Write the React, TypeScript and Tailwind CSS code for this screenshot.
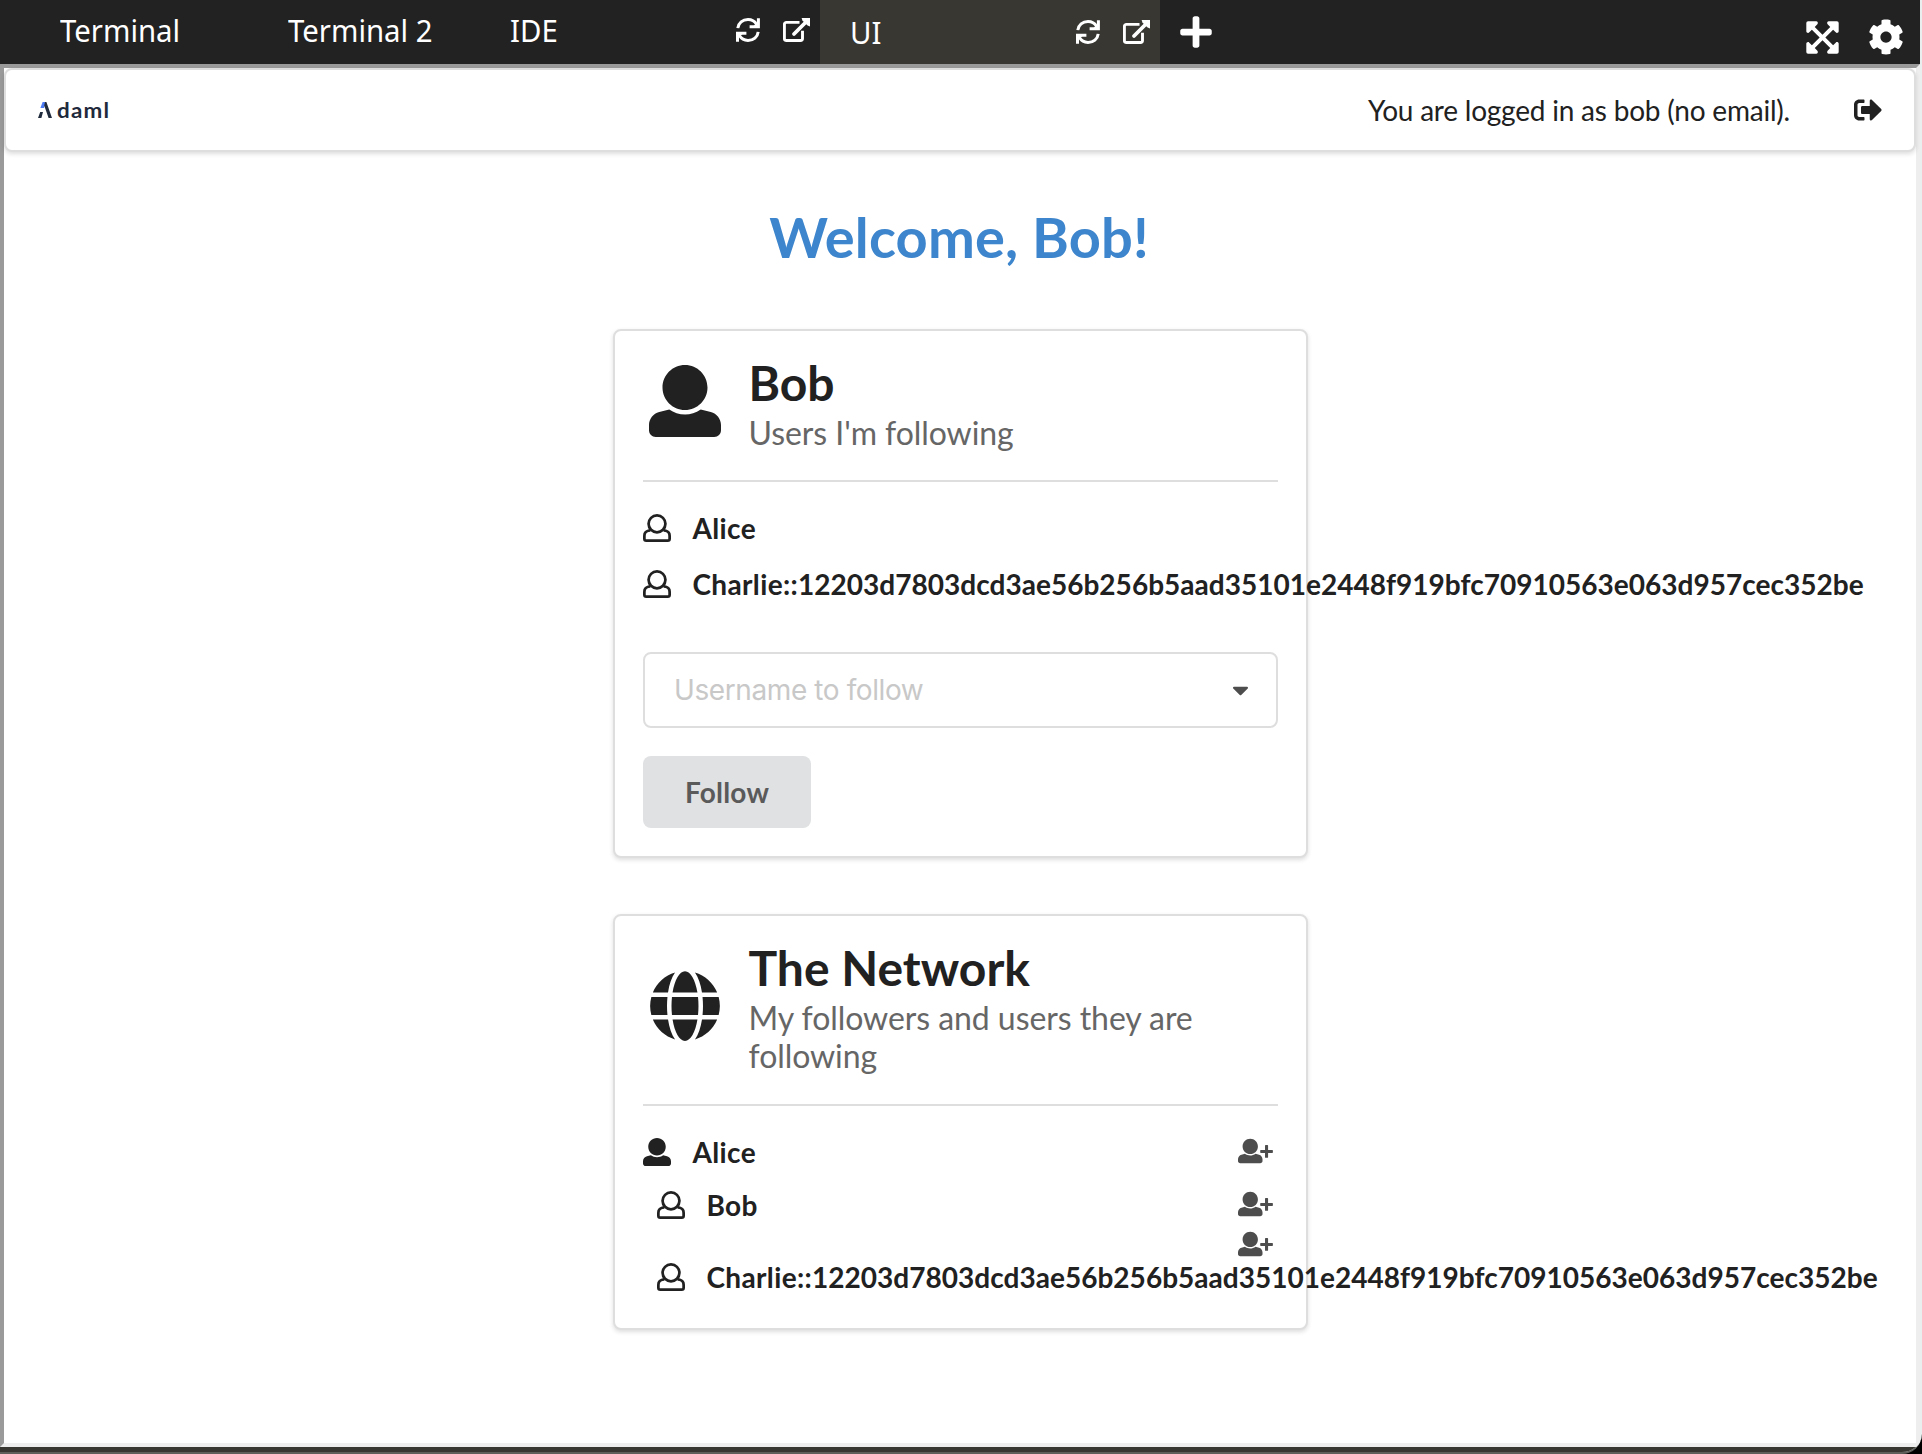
import React from "react";
import { FaPlus, FaExpandArrowsAlt, FaCog, FaSignOutAlt, FaGlobe, FaCaretDown } from "react-icons/fa";

const CHARLIE_ID = "12203d7803dcd3ae56b256b5aad35101e2448f919bfc70910563e063d957cec352be";

function RefreshIcon() {
  return (
    <svg viewBox="0 0 24 24" className="h-6 w-6" fill="none" stroke="#fff" strokeWidth="3">
      <path d="M1.8 10.2C2.4 5 6.6 1.6 12 1.6c3.8 0 6.8 1.8 8.6 4.8" />
      <path d="M22.4 0.2V8.8H13.6" />
      <path d="M22.2 13.8C21.6 19 17.4 22.4 12 22.4c-3.8 0-6.8-1.8-8.6-4.8" />
      <path d="M1.5 23.8V15.2H10.4" />
      <path d="M17 8.6L22.8 3V8.6zM7 15.4L1.2 21V15.4z" fill="#fff" stroke="none" />
    </svg>
  );
}

function ExternalIcon() {
  return (
    <svg viewBox="0 0 27 24" className="h-6 w-[27px]" fill="none" stroke="#fff">
      <path d="M16.5 4.4H3.4a2 2 0 0 0-2 2V20.5a2 2 0 0 0 2 2H17.5a2 2 0 0 0 2-2V12.8" strokeWidth="2.9" />
      <path d="M11 16L23 4" strokeWidth="3.8" strokeLinecap="round" />
      <path d="M18.6 0H27V8.4L24.6 7.6 19.4 2.4z" fill="#fff" stroke="none" />
    </svg>
  );
}

const USER_PATH =
  "M256 0c88.366 0 160 71.634 160 160s-71.634 160-160 160S96 248.366 96 160 167.634 0 256 0zm183.283 333.821l-71.313-17.828c-74.923 53.89-165.738 41.864-223.94 0l-71.313 17.828C29.981 344.505 0 382.903 0 426.955V464c0 26.51 21.49 48 48 48h416c26.51 0 48-21.49 48-48v-37.045c0-44.052-29.981-82.45-72.717-93.134z";

function UserSolid({ className }: { className: string }) {
  return (
    <svg viewBox="0 0 512 512" className={className} fill="#212121">
      <path d={USER_PATH} />
    </svg>
  );
}

function UserOutline() {
  return (
    <svg viewBox="0 0 512 512" className="-ml-[0.5px] h-7 w-7 shrink-0" fill="none" stroke="#212121" strokeWidth="50">
      <circle cx="256" cy="180" r="154" />
      <path d="M132 298L95 307C52 319 25 356 25 400V452Q25 487 60 487H452Q487 487 487 452V400C487 356 460 319 417 307L380 298" />
    </svg>
  );
}

function UserPlus() {
  return (
    <svg viewBox="0 0 640 512" className="mr-[5.5px] mb-px h-7 w-[35px] shrink-0" fill="#4d4d4d">
      <path d={USER_PATH} transform="translate(0 32) scale(.875)" />
      <path
        d="M508 160a12 12 0 0 1 12-12h32a12 12 0 0 1 12 12v76h76a12 12 0 0 1 12 12v32a12 12 0 0 1-12 12h-76v76a12 12 0 0 1-12 12h-32a12 12 0 0 1-12-12v-76h-76a12 12 0 0 1-12-12v-32a12 12 0 0 1 12-12h76z"
        transform="translate(-14 0)"
      />
    </svg>
  );
}

function TabLabel({ children }: { children: React.ReactNode }) {
  return <span className="origin-left scale-x-[.947] whitespace-pre">{children}</span>;
}

function TopBar() {
  return (
    <div className="flex h-16 w-[1920px] bg-[#222222] font-['Noto_Sans',sans-serif] text-[31px] leading-[60px] text-white">
      <div className="flex w-[257px] pl-[60px]"><TabLabel>Terminal</TabLabel></div>
      <div className="flex w-[223px] pl-[31px]"><TabLabel>Terminal 2</TabLabel></div>
      <div className="flex w-[340px] pr-[10px] pl-[30px]">
        <TabLabel>IDE</TabLabel>
        <div className="ml-auto flex gap-[23px] pt-[18px]"><RefreshIcon /><ExternalIcon /></div>
      </div>
      <div className="flex w-[340px] bg-[#383732] pt-[2px] pr-[10px] pl-[30px]">
        <TabLabel>UI</TabLabel>
        <div className="ml-auto flex gap-[23px] pt-[18px]"><RefreshIcon /><ExternalIcon /></div>
      </div>
      <FaPlus className="mt-[14px] ml-[20px] h-9 w-8" />
      <div className="ml-auto flex gap-[29px] pr-[16px]">
        <FaExpandArrowsAlt className="mt-[19px] h-[37px] w-[33px]" />
        <FaCog className="mt-[19px] h-[36px] w-[36px]" />
      </div>
    </div>
  );
}

function Navbar() {
  return (
    <div className="flex h-[84px] items-center rounded-lg border-2 border-[#dededf] bg-white shadow-[0_2px_4px_0_rgba(34,36,38,0.15)]">
      <div className="ml-8 flex items-center">
        <svg viewBox="0 0 14 16" className="h-4 w-[14px]">
          <path d="M4.6 0H8L6 6H2.4z" fill="#4c7bf4" />
          <path d="M7 0H8.4L14 16H10.6L6.2 3.4zM2.2 10H5L3.4 16H0z" fill="#1f2a3c" />
        </svg>
        <span className="ml-[5px] origin-left scale-x-[1.12] text-[20px] leading-6 font-bold tracking-[1.1px] text-[#1f2a3c]">daml</span>
      </div>
      <span className="ml-auto tracking-[-0.21px]">You are logged in as bob (no email).</span>
      <FaSignOutAlt className="mr-[32px] mb-px ml-[64px] h-7 w-7" />
    </div>
  );
}

function Card({ icon, title, sub, className, children }: { icon: React.ReactNode; title: string; sub: string; className: string; children: React.ReactNode }) {
  return (
    <div className={`flex w-[695px] flex-col rounded-lg border-2 border-[#dededf] bg-white px-7 pt-[22px] shadow-[0_2px_4px_0_rgba(34,36,38,0.15)] ${className}`}>
      <div className="flex items-center border-b-2 border-[#dededf]">
        <div className="ml-[6px] flex w-[72px] shrink-0 justify-center">{icon}</div>
        <div className="ml-[27.5px]">
          <div className="text-[48px] leading-[60px] font-bold">{title}</div>
          <div className="mt-px text-[32px] leading-[38px] tracking-[-0.06px] text-[#666]">{sub}</div>
        </div>
      </div>
      {children}
    </div>
  );
}

function Person({ icon, name, id, className }: { icon: React.ReactNode; name: string; id?: string; className?: string }) {
  return (
    <div className={`flex items-center ${className ?? ""}`}>
      {icon}
      <span className="ml-[22px] font-bold tracking-[0.35px] whitespace-nowrap">
        {name}
        {id && <span className="tracking-[0.02px]">{id}</span>}
      </span>
    </div>
  );
}

export default function App() {
  return (
    <div className="h-[1454px] w-[1922px] overflow-hidden bg-black font-['Lato',sans-serif] text-[28px] leading-[34px] text-[#212121]">
      <div className="flex h-[1454px] flex-col overflow-hidden rounded-br-[20px] border-b-2 border-[#5e5e5a] bg-[#e9eeee]">
        <TopBar />
        <div className="flex h-[1383px] w-[1920px] shrink-0 flex-col border-4 border-t-[#9a9a9a] border-r-[#eeeeee] border-b-[#eeeeee] border-l-[#9a9a9a] bg-white">
          <Navbar />
          <h1 className="mt-[51px] mr-[2px] text-center text-[56px] leading-[68px] font-bold tracking-[0.15px] text-[#3d85cc]">Welcome, Bob!</h1>
          <div className="ml-[609px] flex flex-col gap-14 pt-[58px]">
            <Card
              className="h-[529px] [&>div:first-child]:pb-7"
              title="Bob"
              sub="Users I'm following"
              icon={<UserSolid className="mb-[3px] h-[72px] w-[72px]" />}
            >
              <div className="mt-[18px] flex flex-col">
                <Person className="h-14" icon={<UserOutline />} name="Alice" />
                <Person className="h-14" icon={<UserOutline />} name="Charlie::" id={CHARLIE_ID} />
              </div>
              <div className="mt-10 flex h-[76px] items-center rounded-lg border-2 border-[#dededf] pr-[27px] pl-[29px]">
                <span className="font-['Inter',sans-serif] text-[28px] tracking-[-0.4px] text-[#c8c8c8]">Username to follow</span>
                <FaCaretDown className="ml-auto h-[26px] w-[17px] text-[#4d4d4d]" />
              </div>
              <button className="mt-7 h-[72px] w-[168px] rounded-lg bg-[#e0e1e2] font-bold tracking-[0.2px] text-[#5a5a5b]">Follow</button>
            </Card>
            <Card
              className="h-[416px] [&>div:first-child]:pb-[29px]"
              title="The Network"
              sub="My followers and users they are following"
              icon={<FaGlobe className="mb-[2px] h-[72px] w-[72px]" />}
            >
              <div className="mt-[19px] flex flex-col">
                <div className="flex h-[53px] items-center justify-between">
                  <Person icon={<UserSolid className="-ml-[0.5px] h-7 w-7" />} name="Alice" />
                  <UserPlus />
                </div>
                <div className="flex h-[53px] items-center justify-between pl-[14px]">
                  <Person icon={<UserOutline />} name="Bob" />
                  <UserPlus />
                </div>
                <div className="flex h-[26px] items-center justify-end"><UserPlus /></div>
                <Person className="h-[39px] pl-[14px]" icon={<UserOutline />} name="Charlie::" id={CHARLIE_ID} />
              </div>
            </Card>
          </div>
        </div>
        <div className="grow bg-[#383732]" />
      </div>
    </div>
  );
}
